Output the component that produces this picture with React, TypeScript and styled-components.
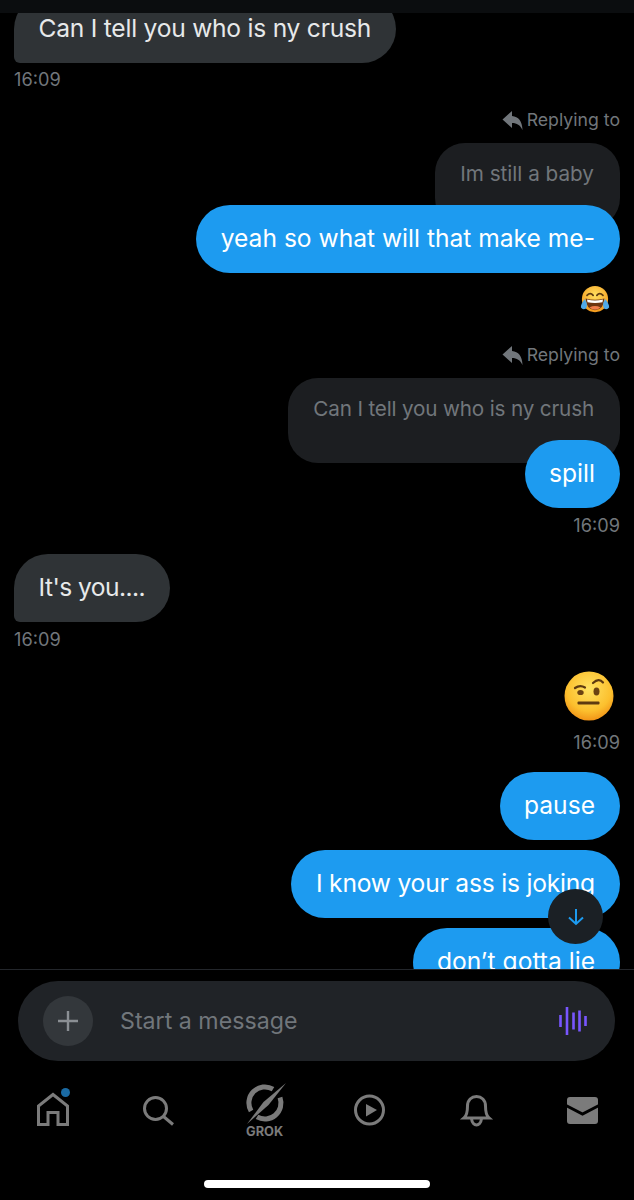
import React from "react";
import styled, { createGlobalStyle } from "styled-components";

const Global = createGlobalStyle`
  html, body { margin: 0; padding: 0; background: #000; }
  body { font-family: Inter, "Liberation Sans", sans-serif; -webkit-font-smoothing: antialiased; }
`;

const Screen = styled.div`
  width: 634px;
  height: 1200px;
  background: #000;
  display: flex;
  flex-direction: column;
  overflow: hidden;
`;
const TopBar = styled.div`
  height: 13px;
  flex: none;
  background: #0b0d0f;
  position: relative;
  z-index: 2;
`;
const ThreadWrap = styled.div`
  position: relative;
  height: 956px;
  flex: none;
`;
const Thread = styled.div`
  height: 100%;
  overflow: hidden;
  display: flex;
  flex-direction: column;
  padding: 0 14px;
  box-sizing: border-box;
`;
const Row = styled.div<{ $mine?: boolean; $top?: number }>`
  display: flex;
  flex-direction: column;
  flex: none;
  align-items: ${(p) => (p.$mine ? "flex-end" : "flex-start")};
  margin-top: ${(p) => p.$top ?? 0}px;
`;
const Bubble = styled.div<{ $kind: "blue" | "gray"; $track?: number }>`
  height: 68px;
  flex: none;
  box-sizing: border-box;
  padding: 0 25px 2px 24.500px;
  display: flex;
  align-items: center;
  font-size: 24.6px;
  letter-spacing: ${(p) => p.$track ?? 0}px;
  white-space: nowrap;
  color: ${(p) => (p.$kind === "blue" ? "#fff" : "#e7e9ea")};
  background: ${(p) => (p.$kind === "blue" ? "#1d9bf0" : "#2f3336")};
  border-radius: ${(p) => (p.$kind === "blue" ? "34px" : "34px 34px 34px 6px")};
  position: relative;
  z-index: 1;
`;
const Quoted = styled.div<{ $track?: number }>`
  height: 85px;
  box-sizing: border-box;
  padding: 18px 26px 0 25px;
  margin-bottom: -23px;
  background: #1c1e21;
  border-radius: 30px;
  color: #71767b;
  font-size: 20.7px;
  letter-spacing: ${(p) => p.$track ?? 0}px;
  white-space: nowrap;
`;
const Time = styled.div<{ $gap?: number }>`
  font-size: 18.2px;
  line-height: 22px;
  color: #71767b;
  margin-top: ${(p) => p.$gap ?? 6}px;
`;
const ReplyLabel = styled.div`
  display: flex;
  align-items: center;
  gap: 4px;
  font-size: 17.7px;
  line-height: 24px;
  color: #71767b;
  margin-bottom: 11px;
`;
const EmojiSlot = styled.div<{ $pad: number; $top?: number; $h: number }>`
  display: flex;
  align-items: center;
  height: ${(p) => p.$h}px;
  padding-right: ${(p) => p.$pad}px;
  margin-top: ${(p) => p.$top ?? 0}px;
`;
const Fab = styled.div`
  position: absolute;
  left: 548px;
  top: 876px;
  width: 55px;
  height: 55px;
  border-radius: 50%;
  background: #1b2025;
  display: flex;
  align-items: center;
  justify-content: center;
  z-index: 3;
`;
const Divider = styled.div`
  height: 1px;
  flex: none;
  background: #23262b;
`;
const ComposerBar = styled.div`
  flex: none;
  padding: 11px 19px 0 18px;
`;
const Composer = styled.div`
  height: 80px;
  border-radius: 40px;
  background: #202327;
  display: flex;
  align-items: center;
  padding: 0 27px 0 25px;
`;
const PlusButton = styled.div`
  width: 50px;
  height: 50px;
  border-radius: 50%;
  background: #33373b;
  display: flex;
  align-items: center;
  justify-content: center;
  flex: none;
`;
const Placeholder = styled.div`
  flex: 1;
  margin-left: 27px;
  font-size: 23.2px;
  color: #71767b;
`;
const Nav = styled.div`
  flex: none;
  height: 72px;
  margin-top: 14px;
  padding: 0 35px 0 36px;
  display: flex;
  justify-content: space-between;
  align-items: flex-start;
`;
const NavItem = styled.div`
  width: 34px;
  height: 60px;
  display: flex;
  flex-direction: column;
  align-items: center;
  position: relative;
  padding-top: 17px;
  box-sizing: border-box;
  svg { flex: none; overflow: visible; }
`;
const Dot = styled.span`
  position: absolute;
  left: 25px;
  top: 13px;
  width: 9px;
  height: 9px;
  border-radius: 50%;
  background: #1a6aa3;
`;
const GrokLabel = styled.span`
  position: absolute;
  top: 50px;
  left: 50%;
  transform: translateX(-50%);
  font-weight: 700;
  font-size: 12.8px;
  line-height: 14px;
  color: #7b7b7b;
`;
const HomeBarWrap = styled.div`
  flex: none;
  margin-top: 33px;
  display: flex;
  justify-content: center;
`;
const HomeBar = styled.div`
  width: 226px;
  height: 8px;
  border-radius: 4px;
  background: #fff;
`;

const GRAY = "#7b7b7b";
const stroke = { fill: "none", stroke: GRAY, strokeWidth: 3 } as const;

const ReplyArrow = () => (
  <svg width="21" height="21" viewBox="0 0 21 21">
    <path d="M0.5 9.500 L10 1 V6 C16.500 6.500 20 11 20.500 20 C18 15 15 13 10 13 V18 Z" fill="#71767b" />
  </svg>
);

const LaughEmoji = () => (
  <svg width="30" height="30" viewBox="0 0 32 32">
    <defs>
      <radialGradient id="lf" cx="50%" cy="35%" r="65%">
        <stop offset="0" stopColor="#ffe060" />
        <stop offset="1" stopColor="#f59a1c" />
      </radialGradient>
    </defs>
    <circle cx="16" cy="15" r="14" fill="url(#lf)" />
    <path d="M7.500 11 Q11 7.500 14 11 M18 11 Q21 7.500 24.500 11" stroke="#5e3a10" strokeWidth="1.900" fill="none" strokeLinecap="round" />
    <path d="M6 14.500 Q16 17 26 14.500 Q25.500 26.500 16 27 Q6.500 26.500 6 14.500 Z" fill="#6b3410" />
    <path d="M7.500 15.500 Q16 17.500 24.500 15.500 L24 18.500 Q16 20 8 18.500 Z" fill="#fff" />
    <path d="M10 24 Q16 21 22 24 Q19 26.500 16 26.500 Q13 26.500 10 24 Z" fill="#ef7d4a" />
    <path d="M5 15 Q0.500 21 1 24 Q3 27 6.500 25 Q9 21 5 15 Z" fill="#4fa9e8" />
    <path d="M27 15 Q31.500 21 31 24 Q29 27 25.500 25 Q23 21 27 15 Z" fill="#4fa9e8" />
  </svg>
);

const BrowEmoji = () => (
  <svg width="50" height="50" viewBox="0 0 50 50">
    <defs>
      <radialGradient id="bf" cx="50%" cy="35%" r="70%">
        <stop offset="0" stopColor="#ffe262" />
        <stop offset="0.650" stopColor="#fcc02e" />
        <stop offset="1" stopColor="#ef8a12" />
      </radialGradient>
    </defs>
    <circle cx="25" cy="25" r="24.500" fill="url(#bf)" />
    <path d="M11 17 Q16 13.500 21 16.500" stroke="#5e3a10" strokeWidth="2.200" fill="none" strokeLinecap="round" />
    <path d="M29 12 Q35 6.500 39 11.500" stroke="#5e3a10" strokeWidth="2.200" fill="none" strokeLinecap="round" />
    <ellipse cx="16.500" cy="21.500" rx="3.200" ry="2.600" fill="#6b4212" />
    <ellipse cx="32.500" cy="20.500" rx="3" ry="4" fill="#6b4212" />
    <rect x="13.500" y="30.500" width="22" height="3" rx="1" fill="#5e3a10" />
  </svg>
);

const Voice = () => (
  <svg width="30" height="30" viewBox="0 0 30 30" stroke="#7856ff" strokeWidth="2.600">
    <path d="M2.500 9v12M9 1v28M15.500 6.500v17M21.500 4.500v21M27.500 10v10" />
  </svg>
);

export default function App() {
  return (
    <Screen>
      <Global />
      <TopBar />
      <ThreadWrap>
        <Thread>
          <Row $top={-18}>
            <Bubble $kind="gray" $track={-0.24}>Can I tell you who is ny crush</Bubble>
            <Time $gap={5}>16:09</Time>
          </Row>
          <Row $mine $top={18}>
            <ReplyLabel><ReplyArrow />Replying to</ReplyLabel>
            <Quoted>Im still a baby</Quoted>
            <Bubble $kind="blue">yeah so what will that make me-</Bubble>
            <EmojiSlot $pad={10} $h={32} $top={11}><LaughEmoji /></EmojiSlot>
          </Row>
          <Row $mine $top={27}>
            <ReplyLabel><ReplyArrow />Replying to</ReplyLabel>
            <Quoted $track={-0.17}>Can I tell you who is ny crush</Quoted>
            <Bubble $kind="blue">spill</Bubble>
            <Time>16:09</Time>
          </Row>
          <Row $top={18}>
            <Bubble $kind="gray" $track={-0.55}>It's you....</Bubble>
            <Time>16:09</Time>
          </Row>
          <Row $mine $top={21}>
            <EmojiSlot $pad={6} $h={50}><BrowEmoji /></EmojiSlot>
            <Time $gap={10}>16:09</Time>
          </Row>
          <Row $mine $top={19}>
            <Bubble $kind="blue">pause</Bubble>
          </Row>
          <Row $mine $top={10}>
            <Bubble $kind="blue" $track={-0.2}>I know your ass is joking</Bubble>
          </Row>
          <Row $mine $top={10}>
            <Bubble $kind="blue">don’t gotta lie</Bubble>
          </Row>
        </Thread>
        <Fab>
          <svg width="20" height="20" viewBox="0 0 20 20" fill="none" stroke="#1d9bf0" strokeWidth="2">
            <path d="M10 2v15M3 10.500L10 17l7-6.500" />
          </svg>
        </Fab>
      </ThreadWrap>
      <Divider />
      <ComposerBar>
        <Composer>
          <PlusButton>
            <svg width="22" height="22" viewBox="0 0 22 22" stroke="#8b8f94" strokeWidth="2.400">
              <path d="M11 1v20M1 11h20" />
            </svg>
          </PlusButton>
          <Placeholder>Start a message</Placeholder>
          <Voice />
        </Composer>
      </ComposerBar>
      <Nav>
        <NavItem>
          <svg width="34" height="34" viewBox="0 0 34 34" {...stroke}>
            <path d="M2.500 32.500V14L17 2.500 31.500 14v18.500H22V20.500H12v12Z" />
          </svg>
          <Dot />
        </NavItem>
        <NavItem>
          <svg width="34" height="34" viewBox="0 0 34 34" {...stroke}>
            <circle cx="13.500" cy="16.500" r="11" />
            <path d="M21.500 24.500l9.500 8" />
          </svg>
        </NavItem>
        <NavItem>
          <svg width="42" height="46" viewBox="0 0 42 46" style={{ marginTop: -11 }}>
            <path d="M29 8.100A16 16 0 0 0 7.100 30" fill="none" stroke={GRAY} strokeWidth="5" />
            <path d="M13 35.900A16 16 0 0 0 36 16.500" fill="none" stroke={GRAY} strokeWidth="5" />
            <path d="M42 2 L24.500 24 L3 43 L19.500 21 Z" fill={GRAY} />
          </svg>
          <GrokLabel>GROK</GrokLabel>
        </NavItem>
        <NavItem>
          <svg width="34" height="34" viewBox="0 0 34 34" {...stroke}>
            <circle cx="16.500" cy="18" r="14" />
            <path d="M13 12l11 6-11 6.500Z" fill={GRAY} stroke="none" />
          </svg>
        </NavItem>
        <NavItem>
          <svg width="34" height="34" viewBox="0 0 34 34" {...stroke}>
            <path d="M5 26c3-2.500 3.500-6 3.500-12C8.500 8 12.500 4.500 17.500 4.500S26.500 8 26.500 14c0 6 .5 9.500 3.500 12Z" />
            <path d="M12.500 26.500C13 31 15.500 33 17.500 33s4.500-2 5-6.500" />
          </svg>
        </NavItem>
        <NavItem>
          <svg width="34" height="34" viewBox="0 0 34 34">
            <rect x="2" y="5" width="31" height="27" rx="3" fill={GRAY} />
            <path d="M1 13.500L17.500 22 34 13.500" fill="none" stroke="#000" strokeWidth="3" />
          </svg>
        </NavItem>
      </Nav>
      <HomeBarWrap>
        <HomeBar />
      </HomeBarWrap>
    </Screen>
  );
}
